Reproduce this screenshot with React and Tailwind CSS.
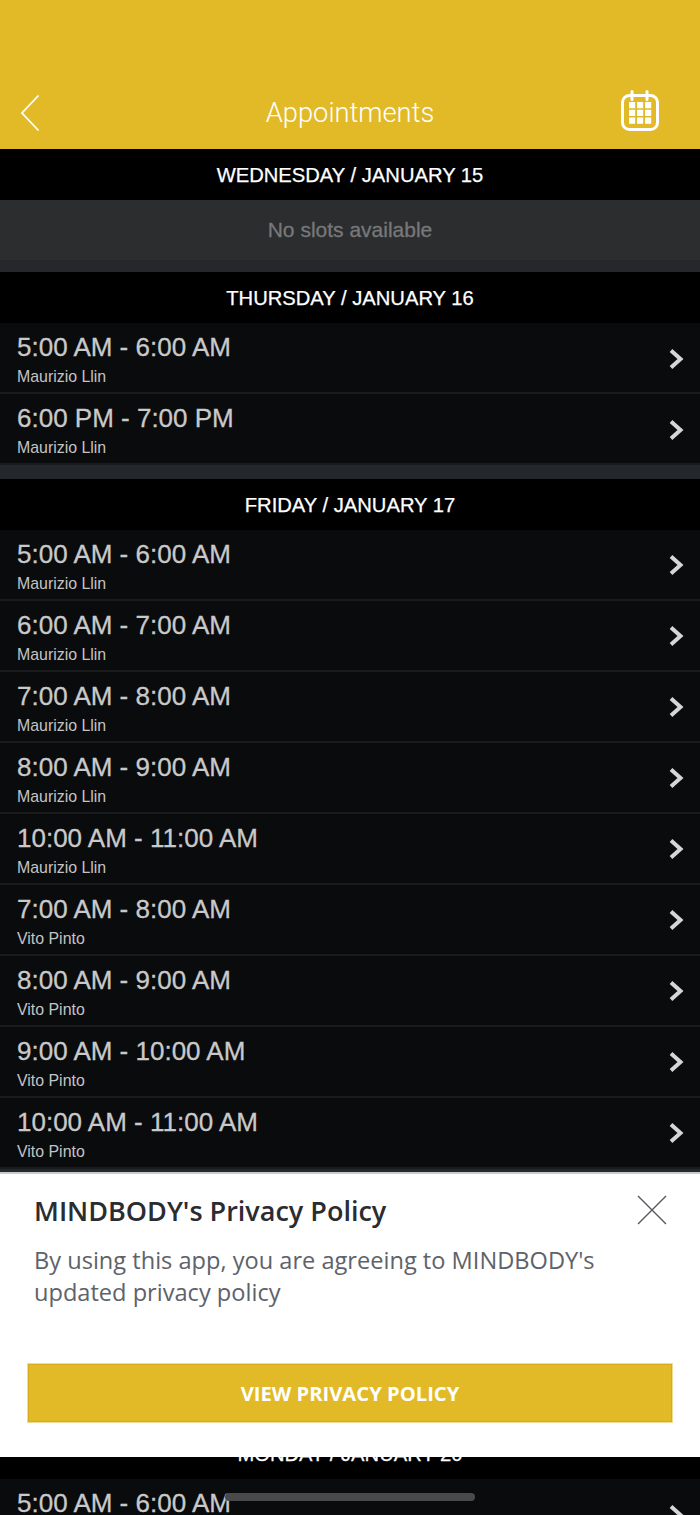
const Chevron = () => (
  <svg width="16" height="22" viewBox="0 0 16 22" className="shrink-0 mt-[2px]">
    <path d="M3 2.5 L12.5 11 L3 19.5" fill="none" stroke="#d6d6d6" strokeWidth="4" />
  </svg>
);

const Row = ({ time, name }) => (
  <div className="h-[71px] bg-[#0a0b0d] border-b-2 border-[#1a1b1d] flex items-center justify-between pl-[17px] pr-[16px]">
    <div className="flex flex-col">
      <span className="text-[26px] leading-[29px] text-[#c9c9c9] mt-[4px] [-webkit-text-stroke:0.3px_#c9c9c9]">{time}</span>
      <span className="text-[15.9px] leading-[18px] text-[#c4c4c4] mt-[6px]">{name}</span>
    </div>
    <Chevron />
  </div>
);

const Day = ({ label }) => (
  <div className="h-[51px] pt-[2px] bg-black flex items-center justify-center text-white text-[20.2px] [-webkit-text-stroke:0.25px_#ffffff]">{label}</div>
);

const Empty = () => (
  <div className="h-[72px] bg-[#24272b]">
    <div className="h-[60px] bg-[#2c2d2f] flex items-center justify-center text-[#77787a] text-[21px] [-webkit-text-stroke:0.3px_#77787a]">No slots available</div>
  </div>
);

const Spacer = () => <div className="h-[13.5px] bg-[#24272b]" />;

const M = "Maurizio Llin";
const V = "Vito Pinto";
const friday = [
  ["5:00 AM - 6:00 AM", M],
  ["6:00 AM - 7:00 AM", M],
  ["7:00 AM - 8:00 AM", M],
  ["8:00 AM - 9:00 AM", M],
  ["10:00 AM - 11:00 AM", M],
  ["7:00 AM - 8:00 AM", V],
  ["8:00 AM - 9:00 AM", V],
  ["9:00 AM - 10:00 AM", V],
  ["10:00 AM - 11:00 AM", V],
];

export default function App() {
  return (
    <div className="relative w-[700px] h-[1515px] overflow-hidden bg-black font-['Liberation_Sans',sans-serif]">
      <header className="h-[149px] bg-[#e2ba28] flex items-end justify-between pl-[20px] pr-[41px] pb-[15px]">
        <div className="w-[38px]">
          <svg width="20" height="38" viewBox="0 0 20 38" className="mb-[2px]">
            <path d="M18.5 1.5 L2 19 L18.5 36.5" fill="none" stroke="#fff" strokeWidth="1.8" />
          </svg>
        </div>
        <h1 className="text-white text-[27.3px] leading-[44px] font-['Roboto',sans-serif] font-light ml-[21px] mb-[-1px]">Appointments</h1>
        <svg width="38" height="42" viewBox="0 0 38 42" className="mb-[2px]">
          <rect x="1.5" y="5.5" width="35" height="34" rx="7" fill="none" stroke="#fff" strokeWidth="3" />
          <path d="M11 1.5v8M26 1.5v8" stroke="#fff" strokeWidth="3" strokeLinecap="round" />
          {[0, 1, 2].flatMap((r) =>
            [0, 1, 2].map((c) => (
              <rect key={`${r}-${c}`} x={8 + c * 8} y={12 + r * 7.8} width="6.2" height="6.2" rx="0.5" fill="#fff" />
            ))
          )}
        </svg>
      </header>

      <Day label="WEDNESDAY / JANUARY 15" />
      <Empty />
      <Day label="THURSDAY / JANUARY 16" />
      <Row time="5:00 AM - 6:00 AM" name={M} />
      <Row time="6:00 PM - 7:00 PM" name={M} />
      <Spacer />
      <Day label="FRIDAY / JANUARY 17" />
      {friday.map(([t, n], i) => (
        <Row key={i} time={t} name={n} />
      ))}
      <Spacer />
      <Day label="SATURDAY / JANUARY 18" />
      <Empty />
      <Day label="SUNDAY / JANUARY 19" />
      <Empty />
      <Day label="MONDAY / JANUARY 20" />
      <Row time="5:00 AM - 6:00 AM" name={M} />

      <div className="absolute left-0 right-0 top-[1172px] h-[285px] bg-white border-t-2 border-[#c9cacc] font-['Open_Sans',sans-serif]">
        <div className="flex items-start justify-between pl-[34px] pr-[33px] pt-[19px]">
          <h2 className="text-[27px] leading-[36px] font-semibold text-[#2b2c30]">MINDBODY's Privacy Policy</h2>
          <svg width="30" height="30" viewBox="0 0 30 30" className="mt-[2px]">
            <path d="M1 1 L29 29 M29 1 L1 29" stroke="#55585e" strokeWidth="1.4" fill="none" />
          </svg>
        </div>
        <p className="px-[34px] mt-[15px] text-[23.6px] leading-[32px] text-[#5e626a]">
          By using this app, you are agreeing to MINDBODY's updated privacy policy
        </p>
        <div className="px-[27px] mt-[55px]">
          <button className="w-full h-[60px] bg-[#e2ba28] border border-[#f0dc95] shadow-[inset_0_0_0_1px_#d6ab1c] text-white text-[20.2px] font-bold flex items-center justify-center">
            VIEW PRIVACY POLICY
          </button>
        </div>
      </div>

      <div className="absolute left-[225px] top-[1493px] w-[250px] h-[8px] rounded-full bg-[#4a4a4a]" />
    </div>
  );
}
